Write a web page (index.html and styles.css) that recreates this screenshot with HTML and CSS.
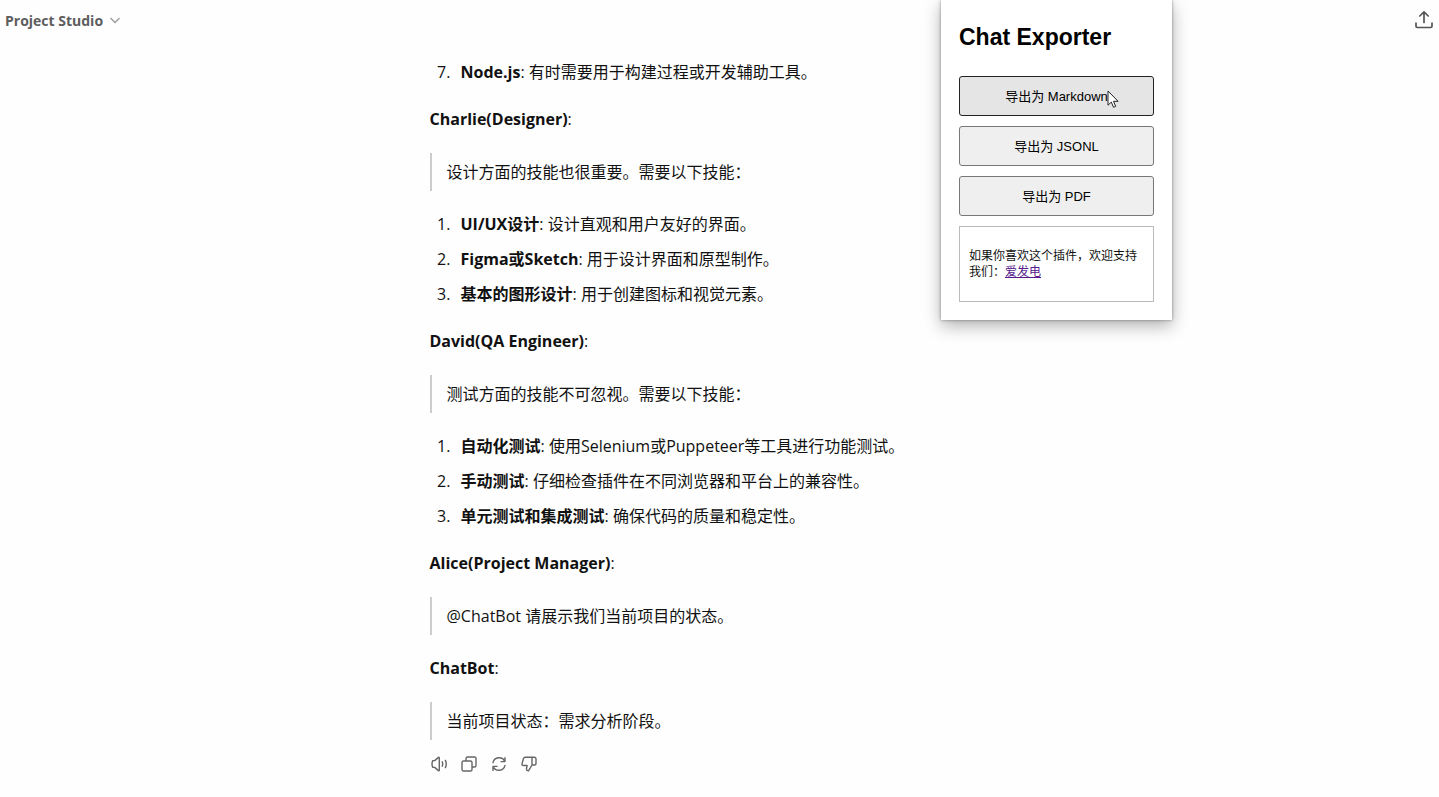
FILE: index.html
```
<!DOCTYPE html>
<html lang="zh-CN">
<head>
    <meta charset="UTF-8">
    <meta name="viewport" content="width=device-width, initial-scale=1.0">
    <title>Project Studio</title>
    <link rel="stylesheet" href="styles.css">
</head>
<body>
    <header class="top-bar">
        <button class="model-btn">
            Project Studio
            <svg width="12" height="12" viewBox="0 0 12 12" fill="none" stroke="#999" stroke-width="1.3"><path d="M1.5 4L6 8.5L10.5 4"/></svg>
        </button>
        <button class="icon-btn" aria-label="Share">
            <svg width="20" height="20" viewBox="0 0 20 20" fill="none" stroke="#555" stroke-width="1.7" stroke-linecap="round" stroke-linejoin="round"><path d="M10 12.5V2M5.8 6L10 1.8L14.2 6M2 13v3.2q0 1.3 1.3 1.3h13.4q1.3 0 1.3-1.3V13"/></svg>
        </button>
    </header>

    <main class="chat">
        <ol start="7">
            <li><strong>Node.js</strong>: 有时需要用于构建过程或开发辅助工具。</li>
        </ol>

        <p><strong>Charlie(Designer)</strong>:</p>
        <blockquote>设计方面的技能也很重要。需要以下技能：</blockquote>
        <ol>
            <li><strong>UI/UX设计</strong>: 设计直观和用户友好的界面。</li>
            <li><strong>Figma或Sketch</strong>: 用于设计界面和原型制作。</li>
            <li><strong>基本的图形设计</strong>: 用于创建图标和视觉元素。</li>
        </ol>

        <p><strong>David(QA Engineer)</strong>:</p>
        <blockquote>测试方面的技能不可忽视。需要以下技能：</blockquote>
        <ol>
            <li><strong>自动化测试</strong>: 使用Selenium或Puppeteer等工具进行功能测试。</li>
            <li><strong>手动测试</strong>: 仔细检查插件在不同浏览器和平台上的兼容性。</li>
            <li><strong>单元测试和集成测试</strong>: 确保代码的质量和稳定性。</li>
        </ol>

        <p><strong>Alice(Project Manager)</strong>:</p>
        <blockquote>@ChatBot 请展示我们当前项目的状态。</blockquote>

        <p><strong>ChatBot</strong>:</p>
        <blockquote>当前项目状态：需求分析阶段。</blockquote>

        <div class="actions">
            <button class="icon-btn" aria-label="Read aloud">
                <svg width="18" height="18" viewBox="0 0 18 18" fill="none" stroke="#666" stroke-width="1.4" stroke-linecap="round" stroke-linejoin="round"><path d="M9.3 2.8v12.4q0 .8-.9.4L4.7 12.4H2.8q-1.6-3.4 0-6.8h1.9L8.4 2.4q.9-.4.9.4z"/><path d="M12.2 6.8q1 2.2 0 4.4M15.4 5.4q1.7 3.6 0 7.2"/></svg>
            </button>
            <button class="icon-btn" aria-label="Copy">
                <svg width="18" height="18" viewBox="0 0 18 18" fill="none" stroke="#666" stroke-width="1.4" stroke-linejoin="round"><rect x="2" y="6" width="10" height="10" rx="1.6"/><path d="M6 6V3.6Q6 2 7.6 2h6.8Q16 2 16 3.6v6.8q0 1.6-1.6 1.6H12"/></svg>
            </button>
            <button class="icon-btn" aria-label="Regenerate">
                <svg width="18" height="18" viewBox="0 0 18 18" fill="none" stroke="#666" stroke-width="1.4" stroke-linecap="round" stroke-linejoin="round"><path d="M3 7.6A6.2 6.2 0 0 1 14.8 6.6M15 2.6v4h-4M15 10.4A6.2 6.2 0 0 1 3.2 11.4M3 15.4v-4h4"/></svg>
            </button>
            <button class="icon-btn" aria-label="Bad response">
                <svg width="18" height="18" viewBox="0 0 18 18" fill="none" stroke="#666" stroke-width="1.4" stroke-linecap="round" stroke-linejoin="round"><path d="M12 2.3H5.1q-1.2 0-1.6 1.2L2.1 8.4q-.5 2.1 1.6 2.1h3.4l-.6 3.1q-.2 2.3 2 2.3L12 10V2.3h2.2q1.8 0 1.8 1.8v4.1q0 1.8-1.8 1.8H12"/></svg>
            </button>
        </div>
    </main>

    <aside class="popup">
        <h1>Chat Exporter</h1>
        <button class="export-btn active">导出为 Markdown</button>
        <button class="export-btn">导出为 JSONL</button>
        <button class="export-btn">导出为 PDF</button>
        <div class="support">
            如果你喜欢这个插件，欢迎支持我们：<a href="#">爱发电</a>
        </div>
        <svg class="cursor" width="12" height="19" viewBox="0 0 12 19" fill="#fff" stroke="#222" stroke-width="1"><path d="M1 1v14.2l3.3-3.1 2.2 5.2 2.2-.9-2.2-5.1h4.6z"/></svg>
    </aside>
</body>
</html>
```
FILE: styles.css
```
* { box-sizing: border-box; }

body {
    margin: 0;
    background-color: #fefefe;
    color: #111;
    font-family: "Open Sans", "Noto Sans CJK SC", sans-serif;
    font-size: 16px;
    line-height: 27px;
}

button {
    font-family: inherit;
    cursor: pointer;
}

.top-bar {
    display: flex;
    justify-content: space-between;
    align-items: center;
    height: 40px;
    padding: 0 5px;
}

.model-btn {
    display: flex;
    align-items: center;
    gap: 6px;
    padding: 0;
    border: none;
    background: none;
    color: #5d5d5d;
    font-size: 14px;
    font-weight: 700;
}

.icon-btn {
    display: flex;
    padding: 0;
    border: none;
    background: none;
}

.chat {
    max-width: 580px;
    margin: 0 auto;
    padding-top: 19px;
}

.chat p { margin: 20px 0; }
.chat strong { font-weight: 700; }

.chat ol {
    display: flex;
    flex-direction: column;
    gap: 8px;
    margin: 0;
    padding-left: 25px;
}

.chat li { padding-left: 6px; }

.chat blockquote {
    margin: 20px 0;
    padding-left: 15px;
    border-left: 2px solid #ccc;
    line-height: 38px;
}

.actions {
    display: flex;
    gap: 12px;
    margin-top: -5px;
}

.popup {
    position: absolute;
    top: 0;
    right: 267px;
    display: flex;
    flex-direction: column;
    gap: 10px;
    width: 231px;
    padding: 20px 18px 18px;
    background-color: #fff;
    box-shadow: 0 6px 16px rgba(0, 0, 0, 0.3), 0 0 3px rgba(0, 0, 0, 0.4);
    font-family: "Liberation Sans", "Noto Sans CJK SC", sans-serif;
}

.popup h1 {
    margin: 0 0 12px;
    color: #000;
    font-size: 23px;
    line-height: 34px;
}

.export-btn {
    height: 40px;
    padding: 0 6px 2px;
    border: 1px solid #777;
    border-radius: 3px;
    background-color: #efefef;
    color: #000;
    font-size: 13px;
}

.export-btn.active {
    border-color: #222;
    background-color: #e5e5e5;
}

.support {
    padding: 21px 9px;
    border: 1px solid #bbb;
    font-size: 12px;
    line-height: 16px;
}

.support a { color: #551a8b; }

.cursor {
    position: absolute;
    top: 90px;
    left: 166px;
}
```
